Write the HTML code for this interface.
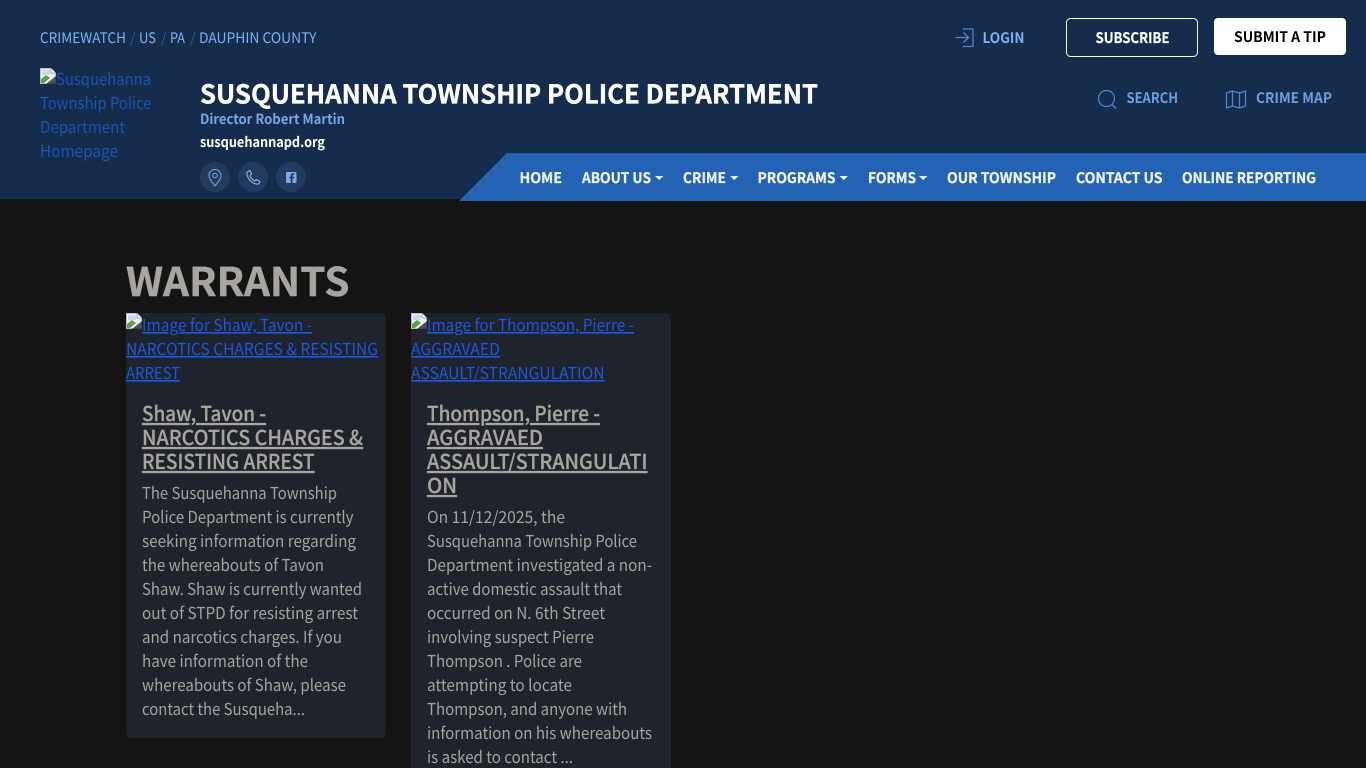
<!DOCTYPE html>
<html lang="en">
<head>
<meta charset="utf-8">
<title>Warrants - Susquehanna Township Police Department</title>
<style>
html,body{margin:0;padding:0;width:1366px;height:768px;overflow:hidden;background:#141414}
svg{display:block;position:absolute;left:0;top:0}
text{font-family:"Noto Sans CJK JP","Liberation Sans",sans-serif;text-rendering:geometricPrecision}
.bc{font-size:14.5px;fill:#7fb0f3}
.sl{font-size:14px;fill:#2f5a92}
.lg{font-size:16.5px;fill:#1d54b4}
.nav{font-size:14.5px;font-weight:700;fill:#f2f7ff;stroke:#f2f7ff;stroke-width:.25px}
.tool{font-size:14.5px;font-weight:700;fill:#6d9edd}
.alt{font-size:16.5px;fill:#1f57de;text-decoration:underline}
.h{font-size:20.5px;font-weight:500;fill:#a8a5a0;stroke:#a8a5a0;stroke-width:.25px;text-decoration:underline}
.p{font-size:16.5px;fill:#a5a39e}
</style>
</head>
<body>
<svg width="1366" height="768" viewBox="0 0 1366 768" xmlns="http://www.w3.org/2000/svg">
<defs>
<g id="broken">
<path d="M0.5 0.5H11L15.5 5V15.5H0.5Z" fill="#f1f3f6" stroke="#b9bec6" stroke-width="1"/>
<path d="M11 .5V5H15.5" fill="#fff" stroke="#9aa0a8"/>
<path d="M2 2H10V7H2Z" fill="#c9d9f2"/>
<path d="M1 15V11L6 7L10 10L4 15Z" fill="#5aa33c"/>
<path d="M16 8L6 16H16Z" fill="#121c2c" opacity=".75"/>
</g>
</defs>

<!-- header -->
<rect x="0" y="0" width="1366" height="199" fill="#152c4c"/>
<text class="bc" x="40" y="43" textLength="86" lengthAdjust="spacingAndGlyphs">CRIMEWATCH</text>
<text class="sl" x="130" y="43">/</text>
<text class="bc" x="139" y="43" textLength="17" lengthAdjust="spacingAndGlyphs">US</text>
<text class="sl" x="161" y="43">/</text>
<text class="bc" x="170" y="43" textLength="15" lengthAdjust="spacingAndGlyphs">PA</text>
<text class="sl" x="190" y="43">/</text>
<text class="bc" x="199" y="43" textLength="117.500" lengthAdjust="spacingAndGlyphs">DAUPHIN COUNTY</text>

<use href="#broken" x="40" y="68"/>
<text class="lg" x="56" y="85" textLength="95" lengthAdjust="spacingAndGlyphs">Susquehanna</text>
<text class="lg" x="40" y="109" textLength="111.500" lengthAdjust="spacingAndGlyphs">Township Police</text>
<text class="lg" x="40" y="133" textLength="85" lengthAdjust="spacingAndGlyphs">Department</text>
<text class="lg" x="40" y="157" textLength="78" lengthAdjust="spacingAndGlyphs">Homepage</text>

<text x="200" y="103.500" font-size="26" font-weight="700" fill="#fff" stroke="#fff" stroke-width=".35" textLength="618" lengthAdjust="spacingAndGlyphs">SUSQUEHANNA TOWNSHIP POLICE DEPARTMENT</text>
<text x="200" y="124" font-size="14" font-weight="700" fill="#78a6e6" textLength="145" lengthAdjust="spacingAndGlyphs">Director Robert Martin</text>
<text x="200" y="147" font-size="14" font-weight="700" fill="#fff" textLength="125" lengthAdjust="spacingAndGlyphs">susquehannapd.org</text>

<circle cx="215" cy="177" r="15" fill="#223b5f"/>
<circle cx="253" cy="177" r="15" fill="#223b5f"/>
<circle cx="291" cy="177" r="15" fill="#223b5f"/>
<path d="M215 186C212 182 209 179 209 175.500A6 6 0 0 1 221 175.500C221 179 218 182 215 186Z" fill="none" stroke="#7ea6dc" stroke-width="1"/>
<circle cx="215" cy="175.500" r="2.300" fill="none" stroke="#7ea6dc" stroke-width="1"/>
<path d="M248 171.500C247 172 246.500 173 247 174.500C248 179 251.500 183 256 184C258 184.500 259.500 183.500 260 181.500L256.500 179.500L254.500 181C252.500 180 250.500 177.500 250 175.500L251.500 174L250 170.500Z" fill="none" stroke="#8fb5e6" stroke-width="1.100" stroke-linejoin="round"/>
<rect x="286" y="172" width="10.500" height="11" rx="1.500" fill="#7ea9e6"/>
<path d="M292.500 183V178.500H294L294.300 176.800H292.500V175.900C292.500 175.200 292.800 174.900 293.500 174.900H294.400V173.400H293C291.400 173.400 290.700 174.300 290.700 175.700V176.800H289.300V178.500H290.700V183Z" fill="#223b5f"/>

<!-- top actions -->
<path d="M955.500 37.500H968M963.500 32.500L968.500 37.500L963.500 42.500M963 29H973V46.500H963" fill="none" stroke="#4f88d2" stroke-width="1.300"/>
<text x="982.500" y="43" font-size="14.500" font-weight="700" fill="#7fb1f6" textLength="42" lengthAdjust="spacingAndGlyphs">LOGIN</text>
<rect x="1066.500" y="18.500" width="131" height="38" rx="4" fill="#152c4c" stroke="#fff" stroke-width="1"/>
<text x="1095.500" y="43" font-size="14.500" font-weight="700" fill="#fff" stroke="#fff" stroke-width=".2" textLength="74" lengthAdjust="spacingAndGlyphs">SUBSCRIBE</text>
<rect x="1214" y="18" width="132" height="37" rx="4" fill="#fff"/>
<text x="1234" y="42" font-size="14.500" font-weight="700" fill="#000" textLength="92" lengthAdjust="spacingAndGlyphs">SUBMIT A TIP</text>

<circle cx="1106.500" cy="98.500" r="8" fill="none" stroke="#4f88d2" stroke-width="1.200"/>
<path d="M1112 104.500L1116 108.500" fill="none" stroke="#4f88d2" stroke-width="1.300"/>
<text class="tool" x="1126.500" y="103" textLength="51.500" lengthAdjust="spacingAndGlyphs">SEARCH</text>
<path d="M1226.500 93L1232.500 91L1239.500 93L1245.500 91V106L1239.500 108L1232.500 106L1226.500 108ZM1232.500 91V106M1239.500 93V108" fill="none" stroke="#4f88d2" stroke-width="1.200" stroke-linejoin="round"/>
<text class="tool" x="1256" y="103" textLength="76" lengthAdjust="spacingAndGlyphs">CRIME MAP</text>

<!-- nav -->
<path d="M507 153H1366V201H459Z" fill="#2462b3"/>
<text class="nav" x="519.500" y="183" textLength="42.500" lengthAdjust="spacingAndGlyphs">HOME</text>
<text class="nav" x="582" y="183" textLength="69" lengthAdjust="spacingAndGlyphs">ABOUT US</text>
<path d="M655 176H663.500L659.250 180Z" fill="#f2f7ff"/>
<text class="nav" x="683" y="183" textLength="43" lengthAdjust="spacingAndGlyphs">CRIME</text>
<path d="M730 176H738.500L734.250 180Z" fill="#f2f7ff"/>
<text class="nav" x="757.500" y="183" textLength="78" lengthAdjust="spacingAndGlyphs">PROGRAMS</text>
<path d="M839.500 176H848L843.750 180Z" fill="#f2f7ff"/>
<text class="nav" x="868" y="183" textLength="48" lengthAdjust="spacingAndGlyphs">FORMS</text>
<path d="M919 176H927.500L923.250 180Z" fill="#f2f7ff"/>
<text class="nav" x="947" y="183" textLength="109" lengthAdjust="spacingAndGlyphs">OUR TOWNSHIP</text>
<text class="nav" x="1076" y="183" textLength="86.500" lengthAdjust="spacingAndGlyphs">CONTACT US</text>
<text class="nav" x="1182" y="183" textLength="134" lengthAdjust="spacingAndGlyphs">ONLINE REPORTING</text>

<!-- main -->
<text x="126" y="296" font-size="39.500" font-weight="700" fill="#a8a5a0" stroke="#a8a5a0" stroke-width=".4" textLength="223.500" lengthAdjust="spacingAndGlyphs">WARRANTS</text>

<!-- card 1 -->
<rect x="126" y="313" width="260" height="425" rx="6" fill="#1f232b"/>
<use href="#broken" x="126" y="313"/>
<text class="alt" x="142" y="331" textLength="170" lengthAdjust="spacingAndGlyphs">Image for Shaw, Tavon -</text>
<text class="alt" x="126" y="355" textLength="252" lengthAdjust="spacingAndGlyphs">NARCOTICS CHARGES &amp; RESISTING</text>
<text class="alt" x="126" y="379" textLength="54" lengthAdjust="spacingAndGlyphs">ARREST</text>
<text class="h" x="142" y="421" textLength="124" lengthAdjust="spacingAndGlyphs">Shaw, Tavon -</text>
<text class="h" x="142" y="445" textLength="221" lengthAdjust="spacingAndGlyphs">NARCOTICS CHARGES &amp;</text>
<text class="h" x="142" y="469" textLength="172.500" lengthAdjust="spacingAndGlyphs">RESISTING ARREST</text>
<text class="p" x="142" y="499" textLength="195" lengthAdjust="spacingAndGlyphs">The Susquehanna Township</text>
<text class="p" x="142" y="523" textLength="211.500" lengthAdjust="spacingAndGlyphs">Police Department is currently</text>
<text class="p" x="142" y="547" textLength="214" lengthAdjust="spacingAndGlyphs">seeking information regarding</text>
<text class="p" x="142" y="571" textLength="182" lengthAdjust="spacingAndGlyphs">the whereabouts of Tavon</text>
<text class="p" x="142" y="595" textLength="220" lengthAdjust="spacingAndGlyphs">Shaw. Shaw is currently wanted</text>
<text class="p" x="142" y="619" textLength="216" lengthAdjust="spacingAndGlyphs">out of STPD for resisting arrest</text>
<text class="p" x="142" y="643" textLength="200" lengthAdjust="spacingAndGlyphs">and narcotics charges. If you</text>
<text class="p" x="142" y="667" textLength="166" lengthAdjust="spacingAndGlyphs">have information of the</text>
<text class="p" x="142" y="691" textLength="204" lengthAdjust="spacingAndGlyphs">whereabouts of Shaw, please</text>
<text class="p" x="142" y="715" textLength="163" lengthAdjust="spacingAndGlyphs">contact the Susqueha...</text>

<!-- card 2 -->
<rect x="411" y="313" width="260" height="480" rx="6" fill="#1f232b"/>
<use href="#broken" x="411" y="313"/>
<text class="alt" x="427" y="331" textLength="207" lengthAdjust="spacingAndGlyphs">Image for Thompson, Pierre -</text>
<text class="alt" x="411" y="355" textLength="89" lengthAdjust="spacingAndGlyphs">AGGRAVAED</text>
<text class="alt" x="411" y="379" textLength="193.500" lengthAdjust="spacingAndGlyphs">ASSAULT/STRANGULATION</text>
<text class="h" x="427" y="421" textLength="173" lengthAdjust="spacingAndGlyphs">Thompson, Pierre -</text>
<text class="h" x="427" y="445" textLength="116" lengthAdjust="spacingAndGlyphs">AGGRAVAED</text>
<text class="h" x="427" y="469" textLength="220.500" lengthAdjust="spacingAndGlyphs">ASSAULT/STRANGULATI</text>
<text class="h" x="427" y="493" textLength="30" lengthAdjust="spacingAndGlyphs">ON</text>
<text class="p" x="427" y="523" textLength="138" lengthAdjust="spacingAndGlyphs">On 11/12/2025, the</text>
<text class="p" x="427" y="547" textLength="210" lengthAdjust="spacingAndGlyphs">Susquehanna Township Police</text>
<text class="p" x="427" y="571" textLength="225" lengthAdjust="spacingAndGlyphs">Department investigated a non-</text>
<text class="p" x="427" y="595" textLength="195" lengthAdjust="spacingAndGlyphs">active domestic assault that</text>
<text class="p" x="427" y="619" textLength="178" lengthAdjust="spacingAndGlyphs">occurred on N. 6th Street</text>
<text class="p" x="427" y="643" textLength="167" lengthAdjust="spacingAndGlyphs">involving suspect Pierre</text>
<text class="p" x="427" y="667" textLength="155" lengthAdjust="spacingAndGlyphs">Thompson . Police are</text>
<text class="p" x="427" y="691" textLength="145" lengthAdjust="spacingAndGlyphs">attempting to locate</text>
<text class="p" x="427" y="715" textLength="200" lengthAdjust="spacingAndGlyphs">Thompson, and anyone with</text>
<text class="p" x="427" y="739" textLength="225" lengthAdjust="spacingAndGlyphs">information on his whereabouts</text>
<text class="p" x="427" y="763" textLength="146" lengthAdjust="spacingAndGlyphs">is asked to contact ...</text>
</svg>
</body>
</html>
